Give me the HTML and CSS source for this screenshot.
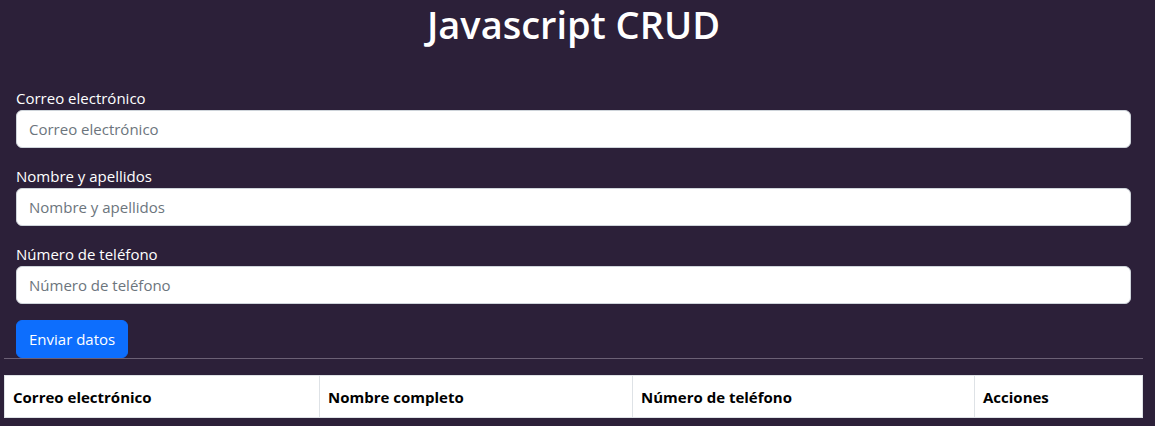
FILE: index.html
```html
<!DOCTYPE html>
<html lang="es">
<head>
<meta charset="utf-8">
<title>Javascript CRUD</title>
<link rel="stylesheet" href="styles.css">
</head>
<body>
<div class="page">
  <h1 class="title">Javascript CRUD</h1>
  <form class="form">
    <div class="group">
      <label class="label" for="email">Correo electrónico</label>
      <input class="input" id="email" type="email" placeholder="Correo electrónico">
    </div>
    <div class="group">
      <label class="label" for="name">Nombre y apellidos</label>
      <input class="input" id="name" type="text" placeholder="Nombre y apellidos">
    </div>
    <div class="group">
      <label class="label" for="phone">Número de teléfono</label>
      <input class="input" id="phone" type="text" placeholder="Número de teléfono">
    </div>
    <button class="btn" type="button">Enviar datos</button>
  </form>
  <hr class="divider">
  <table class="table">
    <thead>
      <tr>
        <th class="c1">Correo electrónico</th>
        <th class="c2">Nombre completo</th>
        <th class="c3">Número de teléfono</th>
        <th class="c4">Acciones</th>
      </tr>
    </thead>
  </table>
</div>
</body>
</html>
```

FILE: styles.css
```css
html, body {
  margin: 0;
  padding: 0;
  background: #2c2039;
}
body {
  font-family: "Open Sans", "Noto Sans", sans-serif;
  font-size: 16px;
  line-height: 24px;
  color: #fff;
}
.page {
  margin: 0 12px 0 4px;
}
.title {
  margin: 0 0 38px;
  text-align: center;
  font-size: 38px;
  line-height: 48px;
  font-weight: 600;
  color: #fff;
}
.form {
  padding: 0 12px;
  display: flex;
  flex-direction: column;
  align-items: flex-start;
}
.group {
  width: 100%;
  margin-bottom: 16px;
  display: flex;
  flex-direction: column;
}
.label {
  font-size: 15px;
  line-height: 24px;
  margin-bottom: 0;
}
.input {
  box-sizing: border-box;
  width: 100%;
  height: 38px;
  padding: 6px 12px;
  font-family: inherit;
  font-size: 15px;
  color: #212529;
  background: #fff;
  border: 1px solid #ced4da;
  border-radius: 6px;
  outline: none;
}
.input::placeholder {
  color: #6c757d;
}
.btn {
  box-sizing: border-box;
  height: 38px;
  padding: 6px 12px;
  font-family: inherit;
  font-size: 15px;
  color: #fff;
  background: #0d6efd;
  border: 1px solid #0d6efd;
  border-radius: 6px;
}
.divider {
  margin: 0 0 16px;
  border: 0;
  border-top: 1px solid #6b6075;
}
.table {
  width: 100%;
  border-collapse: collapse;
  background: #fff;
  color: #000;
}
.table th {
  text-align: left;
  font-size: 15px;
  font-weight: 700;
  padding: 8px 8px;
  height: 42px;
  box-sizing: border-box;
  border: 1px solid #dee2e6;
}
.c1 { width: 315px; }
.c2 { width: 313px; }
.c3 { width: 342px; }
```
